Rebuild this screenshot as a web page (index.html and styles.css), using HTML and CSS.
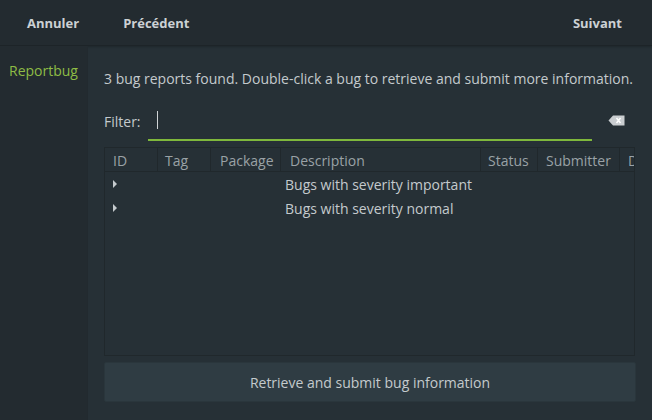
FILE: index.html
```html
<!DOCTYPE html>
<html>
<head>
<meta charset="utf-8">
<link rel="stylesheet" href="styles.css">
</head>
<body>
<div class="window">
  <header class="headerbar">
    <button class="hb-btn hb-cancel">Annuler</button>
    <button class="hb-btn hb-prev">Précédent</button>
    <span class="hb-spacer"></span>
    <button class="hb-btn hb-next">Suivant</button>
  </header>
  <div class="content">
    <aside class="sidebar">
      <div class="side-item">Reportbug</div>
    </aside>
    <main class="main">
      <p class="info">3 bug reports found. Double-click a bug to retrieve and submit more information.</p>
      <div class="filter-row">
        <label class="filter-label">Filter:</label>
        <div class="entry"><span class="cursor"></span></div>
        <svg class="clear-icon" width="17" height="11" viewBox="0 0 17 11">
          <path d="M5 0.5 H16.5 V10.5 H5 L0.5 5.5 Z" fill="#c9cdd0"/>
          <path d="M8.5 3 L12.5 8 M12.5 3 L8.5 8" stroke="#ffffff" stroke-width="1.5"/>
        </svg>
      </div>
      <div class="tree">
        <div class="tree-head">
          <div class="col c-id">ID</div>
          <div class="col c-tag">Tag</div>
          <div class="col c-pkg">Package</div>
          <div class="col c-desc">Description</div>
          <div class="col c-status">Status</div>
          <div class="col c-sub">Submitter</div>
          <div class="col c-d">D</div>
        </div>
        <div class="tree-row">
          <span class="expander"></span>
          <span class="row-text">Bugs with severity important</span>
        </div>
        <div class="tree-row">
          <span class="expander"></span>
          <span class="row-text">Bugs with severity normal</span>
        </div>
      </div>
      <button class="action">Retrieve and submit bug information</button>
    </main>
  </div>
</div>
</body>
</html>
```
FILE: styles.css
```css
html, body {
  margin: 0;
  padding: 0;
  width: 652px;
  height: 420px;
  overflow: hidden;
  background: #263036;
  font-family: "Open Sans", "DejaVu Sans", sans-serif;
  font-size: 14px;
  color: #c4cacd;
}
.window {
  display: flex;
  flex-direction: column;
  height: 420px;
}
.headerbar {
  height: 45px;
  flex: none;
  display: flex;
  align-items: center;
  background: #232b30;
  border-bottom: 1px solid #1d2428;
  box-shadow: 0 1px 2px rgba(0,0,0,0.2);
}
.hb-btn {
  background: none;
  border: none;
  color: #ccd1d4;
  font-family: inherit;
  font-size: 13px;
  font-weight: bold;
  padding: 0;
}
.hb-cancel { margin-left: 27px; }
.hb-prev { margin-left: 44px; }
.hb-spacer { flex: 1; }
.hb-next { margin-right: 30px; }
.content {
  flex: 1;
  display: flex;
}
.sidebar {
  width: 88px;
  flex: none;
  background: #232b30;
  border-right: 1px solid #222a2f;
  box-sizing: border-box;
}
.side-item {
  color: #8ebc45;
  padding: 15px 0 0 9px;
}
.main {
  flex: 1;
  padding: 0 16px 0 16px;
  display: flex;
  flex-direction: column;
}
.info {
  margin: 24px 0 0 0;
  line-height: 18px;
  white-space: nowrap;
}
.filter-row {
  display: flex;
  align-items: center;
  margin-top: 18px;
  height: 30px;
}
.filter-label {
  width: 44px;
  flex: none;
}
.entry {
  width: 444px;
  height: 30px;
  box-sizing: border-box;
  border-bottom: 2px solid #7fb83c;
  display: flex;
  align-items: center;
  padding-left: 9px;
  margin-top: 9px;
  padding-bottom: 10px;
}
.cursor {
  display: block;
  width: 1px;
  height: 18px;
  background: #d0d4d6;
}
.clear-icon {
  margin-left: 16px;
  margin-top: -1px;
}
.tree {
  margin-top: 11px;
  width: 531px;
  height: 209px;
  box-sizing: border-box;
  border: 1px solid #20282c;
  background: #263036;
  overflow: hidden;
  flex: none;
}
.tree-head {
  display: flex;
  height: 23px;
  border-bottom: 1px solid #20282c;
  white-space: nowrap;
}
.col {
  box-sizing: border-box;
  padding-left: 8px;
  padding-top: 2px;
  line-height: 21px;
  color: #9aa2a6;
  border-right: 1px solid #20282c;
  flex: none;
  overflow: hidden;
}
.c-id { width: 53px; }
.c-tag { width: 53px; padding-left: 7px; }
.c-pkg { width: 70px; padding-left: 9px; }
.c-desc { width: 200px; padding-left: 9px; }
.c-status { width: 57px; padding-left: 7px; }
.c-sub { width: 82px; padding-left: 8px; }
.c-d { width: 14px; border-right: none; padding-left: 8px; }
.tree-row {
  display: flex;
  align-items: center;
  height: 24px;
}
.expander {
  width: 0;
  height: 0;
  border-left: 4px solid #c4cacd;
  border-top: 4px solid transparent;
  border-bottom: 4px solid transparent;
  margin-left: 8px;
}
.row-text {
  margin-left: 168px;
  color: #c4cacd;
}
.action {
  margin-top: 6px;
  width: 532px;
  height: 40px;
  flex: none;
  background: #2f3c43;
  border: 1px solid #2a363c;
  border-radius: 2px;
  color: #c4cacd;
  font-family: inherit;
  font-size: 14px;
}
```
